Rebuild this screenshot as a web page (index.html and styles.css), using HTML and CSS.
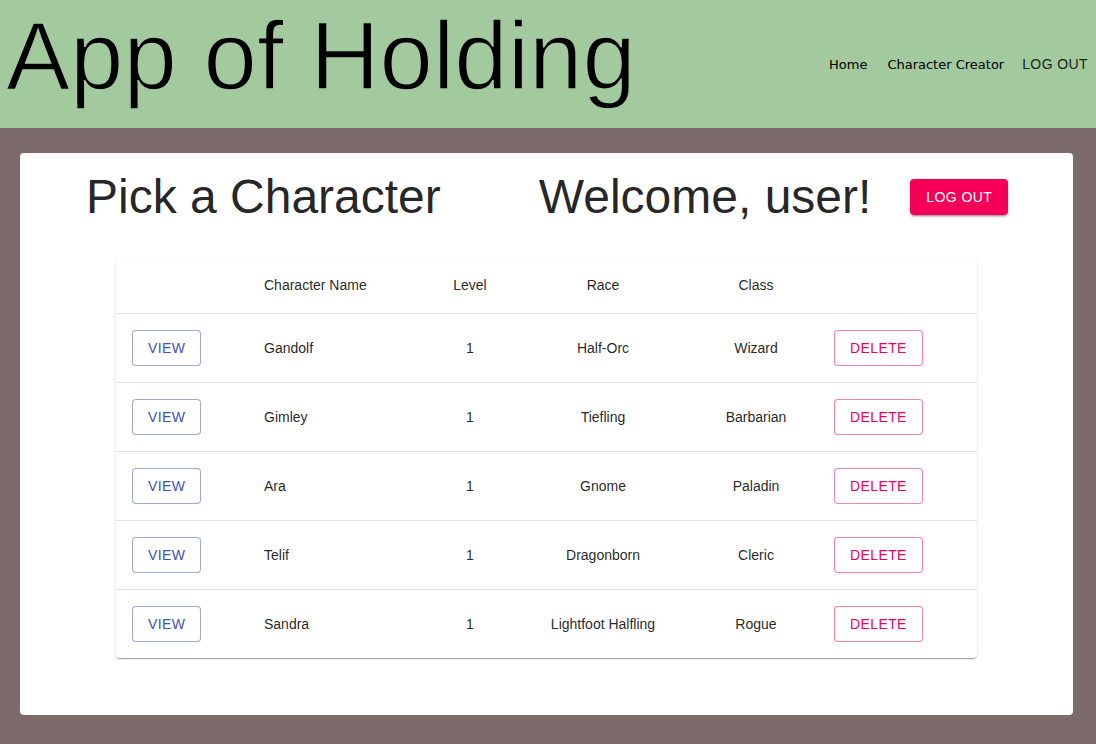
FILE: index.html
```html
<!DOCTYPE html>
<html>
<head>
<meta charset="utf-8">
<title>App of Holding</title>
<link rel="stylesheet" href="styles.css">
</head>
<body>
<header class="topbar">
  <h1 class="app-title">App of Holding</h1>
  <nav class="nav">
    <a class="nav-link" href="#">Home</a>
    <a class="nav-link" href="#">Character Creator</a>
    <button class="nav-button">Log out</button>
  </nav>
</header>
<main class="card">
  <div class="card-head">
    <h3 class="heading pick">Pick a Character</h3>
    <h3 class="heading welcome">Welcome, user!</h3>
    <button class="btn btn-contained">Log out</button>
  </div>
  <div class="paper">
    <table class="chars">
      <colgroup>
        <col class="c-view"><col class="c-name"><col class="c-level"><col class="c-race"><col class="c-class"><col class="c-del">
      </colgroup>
      <thead>
        <tr><th></th><th class="left">Character Name</th><th>Level</th><th>Race</th><th>Class</th><th></th></tr>
      </thead>
      <tbody>
        <tr><td><button class="btn btn-view">View</button></td><td class="left">Gandolf</td><td>1</td><td>Half-Orc</td><td>Wizard</td><td><button class="btn btn-del">Delete</button></td></tr>
        <tr><td><button class="btn btn-view">View</button></td><td class="left">Gimley</td><td>1</td><td>Tiefling</td><td>Barbarian</td><td><button class="btn btn-del">Delete</button></td></tr>
        <tr><td><button class="btn btn-view">View</button></td><td class="left">Ara</td><td>1</td><td>Gnome</td><td>Paladin</td><td><button class="btn btn-del">Delete</button></td></tr>
        <tr><td><button class="btn btn-view">View</button></td><td class="left">Telif</td><td>1</td><td>Dragonborn</td><td>Cleric</td><td><button class="btn btn-del">Delete</button></td></tr>
        <tr><td><button class="btn btn-view">View</button></td><td class="left">Sandra</td><td>1</td><td>Lightfoot Halfling</td><td>Rogue</td><td><button class="btn btn-del">Delete</button></td></tr>
      </tbody>
    </table>
  </div>
</main>
</body>
</html>
```
FILE: styles.css
```css
html, body {
  margin: 0;
  padding: 0;
}
body {
  background: #7d6a6a;
  font-family: "Liberation Sans", Arial, sans-serif;
  color: rgba(0, 0, 0, 0.87);
  min-height: 744px;
  overflow: hidden;
}
.topbar {
  height: 128px;
  background: #a3c99e;
  display: flex;
  justify-content: space-between;
  align-items: center;
}
.app-title {
  align-self: flex-start;
  margin: 0 0 0 6px;
  font-size: 96px;
  font-weight: 400;
  line-height: 112px;
  color: #000;
  -webkit-text-stroke: 1.6px #a3c99e;
  paint-order: fill stroke;
}
.nav {
  display: flex;
  align-items: center;
}
.nav-link {
  font-family: "DejaVu Sans", Verdana, sans-serif;
  font-size: 13px;
  color: #000;
  text-decoration: none;
  margin-right: 20px;
}
.nav-link:nth-child(2) {
  margin-right: 10px;
}
.nav-button {
  font-family: "Liberation Sans", Arial, sans-serif;
  font-size: 14px;
  letter-spacing: 0.4px;
  text-transform: uppercase;
  background: none;
  border: 0;
  padding: 6px 8px;
  color: rgba(0, 0, 0, 0.87);
  line-height: 24px;
  cursor: pointer;
}
.card {
  margin: 25px 23px 0 20px;
  height: 562px;
  box-sizing: border-box;
  background: #fff;
  border-radius: 4px;
  padding-top: 16px;
}
.card-head {
  display: flex;
  align-items: center;
  padding-left: 66px;
}
.heading {
  margin: 0;
  font-size: 48px;
  font-weight: 400;
  line-height: 56px;
  color: rgba(0, 0, 0, 0.87);
}
.welcome {
  margin-left: 98px;
}
.btn {
  font-family: "Liberation Sans", Arial, sans-serif;
  font-size: 14px;
  line-height: 24px;
  letter-spacing: 0.4px;
  text-transform: uppercase;
  border-radius: 4px;
  cursor: pointer;
  box-sizing: border-box;
  height: 36px;
}
.btn-contained {
  margin-left: 39px;
  background: #f50057;
  color: #fff;
  border: 0;
  padding: 6px 16px;
  box-shadow: 0 3px 1px -2px rgba(0,0,0,0.2), 0 2px 2px 0 rgba(0,0,0,0.14), 0 1px 5px 0 rgba(0,0,0,0.12);
}
.btn-view {
  background: #fff;
  color: #3f51b5;
  border: 1px solid rgba(63, 81, 181, 0.5);
  padding: 5px 15px;
}
.btn-del {
  background: #fff;
  color: #f50057;
  border: 1px solid rgba(245, 0, 87, 0.5);
  padding: 5px 15px;
}
.paper {
  width: 861px;
  margin: 32px auto 0;
  background: #fff;
  border-radius: 4px;
  box-shadow: 0 2px 1px -1px rgba(0,0,0,0.2), 0 1px 1px 0 rgba(0,0,0,0.14), 0 1px 3px 0 rgba(0,0,0,0.12);
  overflow: hidden;
}
.chars {
  width: 100%;
  border-collapse: collapse;
  table-layout: fixed;
  font-size: 14px;
}
.c-view { width: 132px; }
.c-name { width: 180px; }
.c-level { width: 84px; }
.c-race { width: 182px; }
.c-class { width: 124px; }
.c-del { width: 159px; }
.chars th, .chars td {
  padding: 16px;
  text-align: center;
  border-bottom: 1px solid rgba(224, 224, 224, 1);
  line-height: 24px;
  color: rgba(0, 0, 0, 0.87);
}
.chars th {
  font-weight: 400;
  height: 24px;
}
.chars tbody td {
  height: 36px;
}
.chars td:first-child, .chars td:last-child {
  text-align: left;
}
.chars .left {
  text-align: left;
}
.chars tbody tr:last-child td {
  border-bottom: 0;
}
```
